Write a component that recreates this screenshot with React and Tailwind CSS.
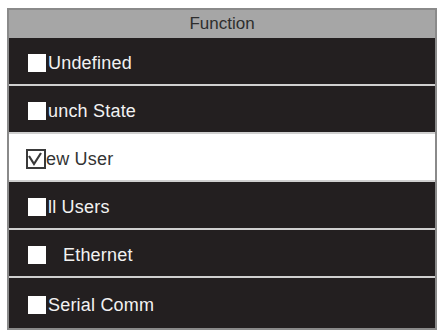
import React from "react";

const rows = [
  { label: "Undefined", gap: "ml-[2px]" },
  { label: "unch State", gap: "ml-[2px]" },
  { label: "ew User", gap: "ml-0", active: true },
  { label: "ll Users", gap: "ml-[2px]" },
  { label: "Ethernet", gap: "ml-[17px]" },
  { label: "Serial Comm", gap: "ml-[2px]" },
];

const Box = ({ active }) => {
  if (active) {
    return (
      <div className="w-[20px] h-[20px] border-2 border-[#3a3a3a] bg-white flex items-center justify-center">
        <svg width="16" height="16" viewBox="0 0 16 16" fill="none">
          <path d="M1 5 L6 13 L13 2" stroke="#3a3a3a" strokeWidth="2.2" />
        </svg>
      </div>
    );
  }
  return <div className="w-[18px] h-[18px] bg-white" />;
};

export default function App() {
  return (
    <div className="w-[440px] h-[332px] bg-white pt-[8px] pl-[7px] font-['Liberation_Sans',Arial,sans-serif]">
      <div className="w-[430px] border-2 border-[#8a8a8a] bg-[#231f20]">
        <div className="h-[28px] bg-[#a6a6a6] flex items-center justify-center text-[17px] text-[#2e2e2e]">
          Function
        </div>
        {rows.map((row, i) => {
          const last = i === rows.length - 1;
          return (
            <div
              key={i}
              className={`flex items-center pt-[4px] ${
                last ? "h-[50px]" : "h-[48px] border-b-2 border-[#cfcfcf]"
              } ${row.active ? "bg-white text-[#333333] pl-[17px]" : "text-[#f2f2f2] pl-[19px]"}`}
            >
              <Box active={row.active} />
              <span className={`text-[18px] leading-none tracking-[0.2px] ${row.gap}`}>{row.label}</span>
            </div>
          );
        })}
      </div>
    </div>
  );
}
